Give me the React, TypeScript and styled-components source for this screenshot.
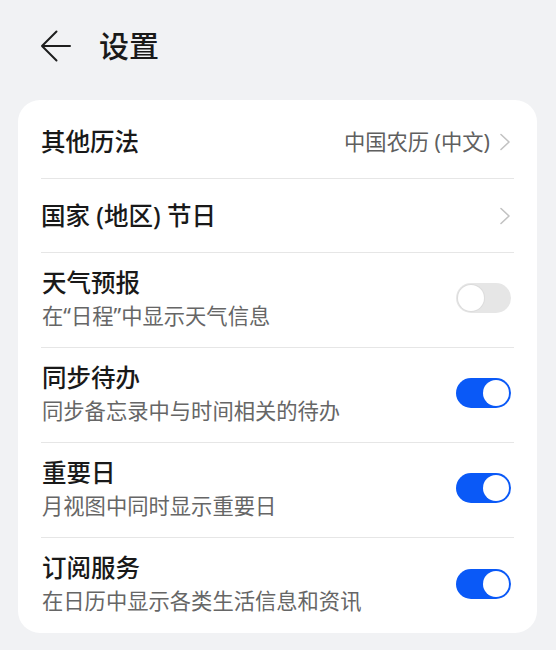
import React from "react";
import styled, { createGlobalStyle } from "styled-components";

const GlobalStyle = createGlobalStyle`
  html, body {
    margin: 0;
    padding: 0;
    background: #f1f2f4;
  }
  body {
    font-family: "Noto Sans", "Noto Sans CJK SC", sans-serif;
    color: #191919;
  }
`;

const Page = styled.div`
  width: 556px;
  min-height: 650px;
  box-sizing: border-box;
  padding: 18px 19px 16px 18px;
  background: #f1f2f4;
`;

const Header = styled.header`
  height: 56px;
  display: flex;
  align-items: center;
  gap: 27px;
  padding-left: 22px;
  margin-bottom: 26px;
`;

const BackButton = styled.button`
  width: 32px;
  height: 32px;
  padding: 0;
  border: none;
  background: none;
  display: flex;
  align-items: center;
  justify-content: flex-start;
  color: #1e1e1e;
`;

const PageTitle = styled.h1`
  margin: 0;
  font-size: 30px;
  font-weight: 500;
  line-height: 40px;
  color: #191919;
`;

const Card = styled.section`
  background: #ffffff;
  border-radius: 22px;
  padding: 5px 23px 0;
`;

const Row = styled.div<{ $double?: boolean; $last?: boolean }>`
  box-sizing: border-box;
  height: ${(p) => (p.$double ? "95px" : "74px")};
  display: flex;
  align-items: center;
  justify-content: space-between;
  border-bottom: ${(p) => (p.$last ? "none" : "1px solid #e6e6e6")};
`;

const TextBlock = styled.div`
  display: flex;
  flex-direction: column;
  gap: 3px;
  padding-left: 1px;
  margin-top: -4px;
`;

const Title = styled.div`
  font-size: 24.5px;
  font-weight: 500;
  line-height: 32px;
  color: #191919;
`;

const Subtitle = styled.div`
  font-size: 21.3px;
  line-height: 28px;
  color: #666666;
`;

const Trailing = styled.div`
  display: flex;
  align-items: center;
  gap: 9px;
  padding-right: 3px;
`;

const Value = styled.span`
  font-size: 21.3px;
  line-height: 28px;
  color: #5f5f5f;
`;

const Track = styled.div<{ $on: boolean }>`
  position: relative;
  width: 55px;
  height: 30px;
  border-radius: 15px;
  background: ${(p) => (p.$on ? "#0a59f7" : "#e6e6e6")};
  margin-top: -4px;
`;

const Knob = styled.span<{ $on: boolean }>`
  position: absolute;
  top: 2px;
  left: ${(p) => (p.$on ? "27px" : "2px")};
  width: 26px;
  height: 26px;
  border-radius: 50%;
  background: #ffffff;
  box-shadow: ${(p) => (p.$on ? "none" : "0 0 0 1px #dcdcdc")};
`;

const Chevron = () => (
  <svg width="12" height="18" viewBox="0 0 12 18" fill="none">
    <path
      d="M2 1.5 L10 9 L2 16.5"
      stroke="#c2c2c2"
      strokeWidth="1.6"
      strokeLinecap="round"
      strokeLinejoin="round"
    />
  </svg>
);

const BackArrow = () => (
  <svg width="32" height="32" viewBox="0 0 32 32" fill="none">
    <path
      d="M30 16 H2 M16.5 1.5 L2 16 L16.5 30.5"
      stroke="currentColor"
      strokeWidth="2"
      strokeLinecap="round"
      strokeLinejoin="round"
    />
  </svg>
);

const Toggle = ({ on }: { on: boolean }) => (
  <Track $on={on}>
    <Knob $on={on} />
  </Track>
);

const toggles = [
  { title: "天气预报", desc: "在“日程”中显示天气信息", on: false },
  { title: "同步待办", desc: "同步备忘录中与时间相关的待办", on: true },
  { title: "重要日", desc: "月视图中同时显示重要日", on: true },
  { title: "订阅服务", desc: "在日历中显示各类生活信息和资讯", on: true },
];

export default function App() {
  return (
    <>
      <GlobalStyle />
      <Page>
        <Header>
          <BackButton aria-label="返回">
            <BackArrow />
          </BackButton>
          <PageTitle>设置</PageTitle>
        </Header>
        <Card>
          <Row>
            <Title>其他历法</Title>
            <Trailing>
              <Value>中国农历 (中文)</Value>
              <Chevron />
            </Trailing>
          </Row>
          <Row>
            <Title>国家 (地区) 节日</Title>
            <Trailing>
              <Chevron />
            </Trailing>
          </Row>
          {toggles.map((t, i) => (
            <Row key={t.title} $double $last={i === toggles.length - 1}>
              <TextBlock>
                <Title>{t.title}</Title>
                <Subtitle>{t.desc}</Subtitle>
              </TextBlock>
              <Trailing>
                <Toggle on={t.on} />
              </Trailing>
            </Row>
          ))}
        </Card>
      </Page>
    </>
  );
}
